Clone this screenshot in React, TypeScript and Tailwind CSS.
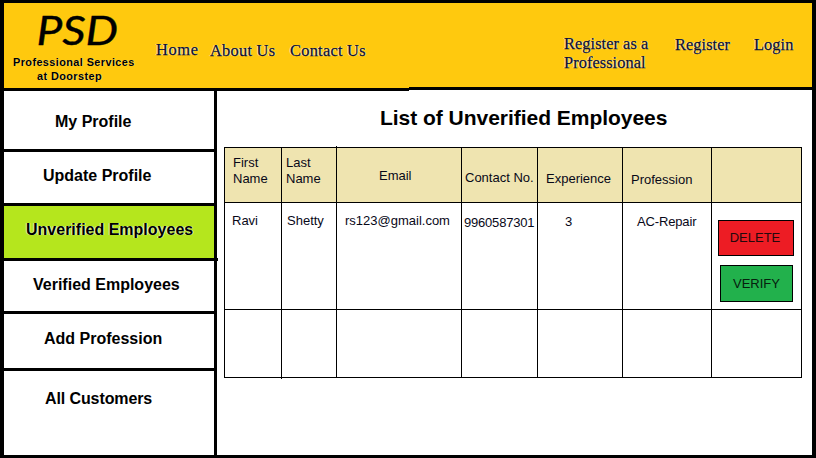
import React from "react";

const menu = [
  { label: "My Profile", row: "h-[61px] border-b-3 pt-[21px] pl-[51px]" },
  { label: "Update Profile", row: "h-[54px] border-b-3 pt-3.5 pl-[39px]" },
  {
    label: "Unverified Employees",
    row: "h-[55px] border-b-3 pt-3.5 pl-[22px] bg-[#b5e61d] [text-shadow:1px_0_0_#ffffffb0,-1px_0_0_#ffffff90]",
  },
  { label: "Verified Employees", row: "h-[53px] border-b-3 pt-3.5 pl-[29px]" },
  { label: "Add Profession", row: "h-[57px] border-b-3 pt-[15px] pl-10" },
  { label: "All Customers", row: "h-[84px] pt-[18px] pl-[41px] tracking-[-0.1px]" },
];

const headings = [
  { text: "First Name", cell: "pt-[7px] pl-2 pr-2" },
  { text: "Last Name", cell: "pt-[7px] pl-1 pr-2" },
  { text: "Email", cell: "pt-5 pl-[42px]" },
  { text: "Contact No.", cell: "pt-[22px] pl-[3px] whitespace-nowrap" },
  { text: "Experience", cell: "pt-[23px] pl-2" },
  { text: "Profession", cell: "pt-6 pl-2" },
  { text: "", cell: "" },
];

const employee = [
  { text: "Ravi", cell: "pt-2.5 pl-[7px]" },
  { text: "Shetty", cell: "pt-2.5 pl-[5px]" },
  { text: "rs123@gmail.com", cell: "pt-2.5 pl-2" },
  { text: "9960587301", cell: "pt-3 pl-0.5 tracking-[-0.2px]" },
  { text: "3", cell: "pt-[11px] pl-[27px]" },
  { text: "AC-Repair", cell: "pt-[11px] pl-3.5 tracking-[-0.15px]" },
];

const Header = () => (
  <header>
    <div className="flex h-[84px] items-start bg-[#ffc90e]">
      <div className="w-[152px] shrink-0">
        <div className="h-[52px] w-[90px] origin-left scale-x-112 pl-[29px] font-['Lato',sans-serif] text-[41px] leading-[54px] italic [-webkit-text-stroke:0.4px_black]">
          PSD
        </div>
        <div className="pl-[9px] text-[11px] leading-[14px] font-bold tracking-[0.35px] whitespace-nowrap [text-shadow:1px_0_0_#ffffff70]">
          Professional Services
          <div className="pl-6">at Doorstep</div>
        </div>
      </div>
      <nav className="flex flex-1 font-['Liberation_Serif',serif] text-[16.5px] leading-5 whitespace-nowrap text-[#10102c] [-webkit-text-stroke:0.25px_#10102c] [text-shadow:1px_0_0_#ffffffb0,-1px_0_0_#ffffff90]">
        <a className="w-[54px] pt-[37px] tracking-[0.6px]">Home</a>
        <a className="w-[80px] pt-[38px] tracking-[0.2px]">About Us</a>
        <a className="w-[274px] pt-[38px] tracking-[0.2px]">Contact Us</a>
        <a className="w-[111px] pt-[31px] leading-[19px]">
          Register as a<br />
          Professional
        </a>
        <a className="w-[79px] pt-8">Register</a>
        <a className="pt-8">Login</a>
      </nav>
    </div>
    <div className="flex">
      <div className="h-1 w-[405px] border-t border-[#ffc90e] bg-black" />
      <div className="h-1 flex-1 border-b border-white bg-black" />
    </div>
  </header>
);

const Sidebar = () => (
  <aside className="relative w-[213px] shrink-0 border-r-3 border-black">
    {menu.map((item) => (
      <div
        key={item.label}
        className={"border-black text-[16px] leading-5 font-bold whitespace-nowrap " + item.row}
      >
        {item.label}
      </div>
    ))}
    <span className="absolute top-[167px] -right-1 h-[3px] w-1 bg-black" />
  </aside>
);

const EmployeeTable = () => (
  <div className="relative ml-[7px] grid w-[578px] grid-cols-[57px_55px_125px_76px_85px_89px_90px] grid-rows-[55px_107px_68px] border-t border-l border-black text-[13px] leading-4 text-[#080818]">
    {headings.map((h, i) => (
      <div key={i} className={"border-r border-b border-black bg-[#efe4b0] " + h.cell}>
        {h.text}
      </div>
    ))}
    {employee.map((e, i) => (
      <div key={i} className={"border-r border-b border-black " + e.cell}>
        {e.text}
      </div>
    ))}
    <div className="border-r border-b border-black pt-[17px] pl-1.5">
      <button className="block h-9 w-19 border border-black bg-[#ed1c24] pr-0.5 text-[#24080c]">
        DELETE
      </button>
      <button className="mt-[9px] ml-0.5 block h-[37px] w-[73px] border border-black bg-[#22b14c] text-[#06200e]">
        VERIFY
      </button>
    </div>
    {headings.map((_, i) => (
      <div key={i} className="border-r border-b border-black" />
    ))}
    <span className="absolute -top-0.5 left-[111px] h-px w-px bg-black" />
    <span className="absolute top-[230px] left-14 h-px w-px bg-black" />
  </div>
);

export default function App() {
  return (
    <div className="flex h-[458px] w-[816px] flex-col overflow-hidden border-x-4 border-y-3 border-black bg-white font-['Liberation_Sans',Arial,sans-serif] text-black">
      <Header />
      <div className="flex min-h-0 flex-1">
        <Sidebar />
        <main className="flex-1">
          <h1 className="h-14 pt-[15px] pl-[163px] text-[21px] leading-6 font-bold tracking-[-0.03px]">
            List of Unverified Employees
          </h1>
          <EmployeeTable />
        </main>
      </div>
    </div>
  );
}
